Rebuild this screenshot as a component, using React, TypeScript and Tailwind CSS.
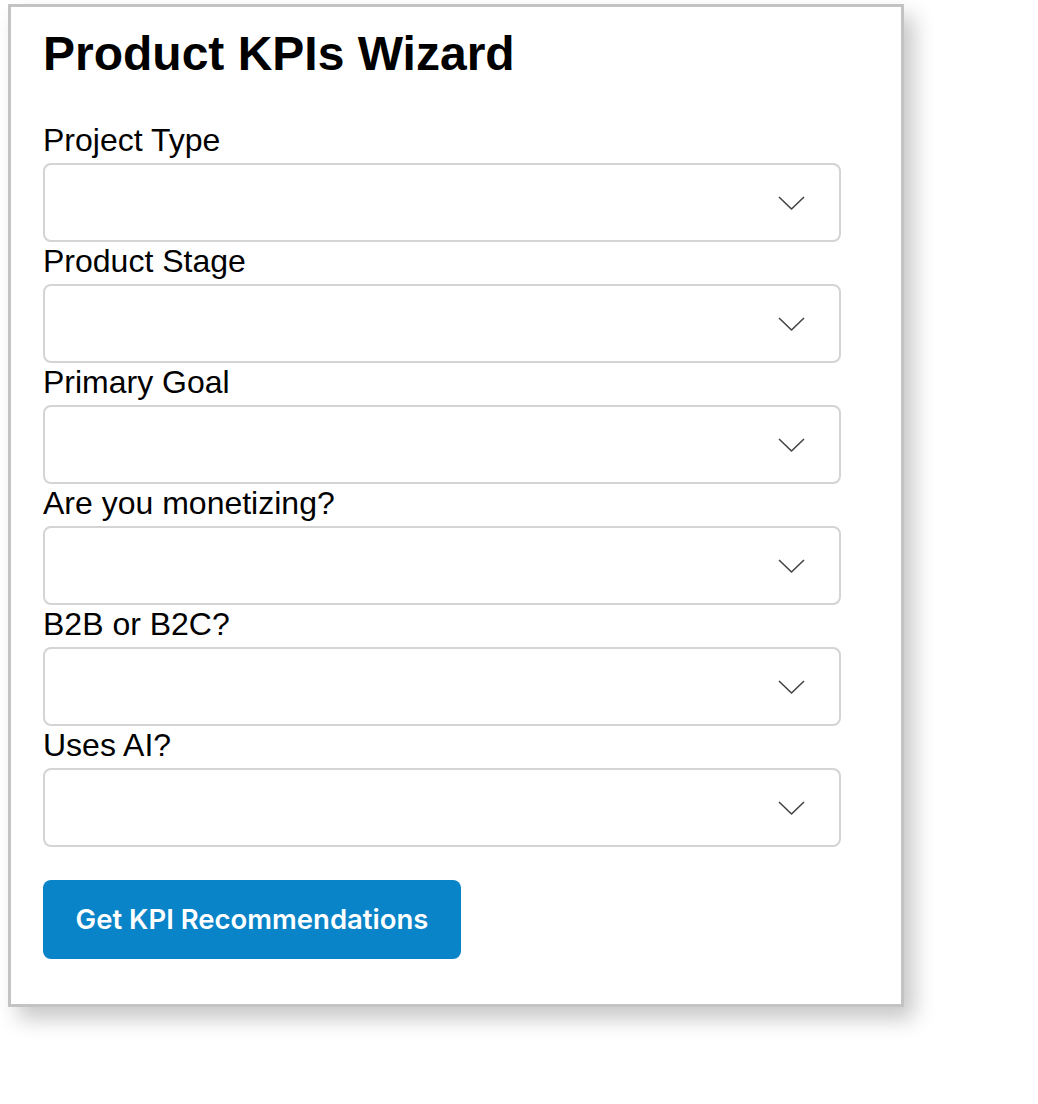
import { useState } from 'react';

const fields = [
  { id: 'projectType', label: 'Project Type' },
  { id: 'productStage', label: 'Product Stage' },
  { id: 'primaryGoal', label: 'Primary Goal' },
  { id: 'monetizing', label: 'Are you monetizing?' },
  { id: 'audience', label: 'B2B or B2C?' },
  { id: 'usesAi', label: 'Uses AI?' },
];

function Chevron() {
  return (
    <svg
      className="pointer-events-none absolute right-[36px] top-1/2 -translate-y-1/2"
      width="27"
      height="15"
      viewBox="0 0 27 15"
      fill="none"
    >
      <path d="M1 1.5 L13.5 13.5 L26 1.5" stroke="#444" strokeWidth="1.6" strokeLinejoin="round" />
    </svg>
  );
}

export default function App() {
  const [values, setValues] = useState<Record<string, string>>({});

  return (
    <div className="min-h-[1104px] bg-white pl-[8px] pt-[4px]" style={{ fontFamily: '"Liberation Sans", Arial, sans-serif' }}>
      <div className="w-[896px] border-[3px] border-[#c3c3c3] bg-white px-[32px] pt-[19px] pb-[45px] shadow-[10px_12px_20px_rgba(0,0,0,0.22)]">
        <h1 className="mb-[39px] text-[48px] font-bold leading-[56px] text-black">Product KPIs Wizard</h1>

        <form className="w-[798px]" onSubmit={(e) => e.preventDefault()}>
          {fields.map((field) => (
            <div key={field.id}>
              <label htmlFor={field.id} className="mb-[4px] block text-[32px] leading-[38px] text-black">
                {field.label}
              </label>
              <div className="relative">
                <select
                  id={field.id}
                  value={values[field.id] ?? ''}
                  onChange={(e) => setValues({ ...values, [field.id]: e.target.value })}
                  className="block h-[79px] w-full appearance-none rounded-[8px] border-2 border-[#d4d4d4] bg-white px-4 text-[28px] outline-none"
                >
                  <option value=""></option>
                </select>
                <Chevron />
              </div>
            </div>
          ))}

          {/* Submit */}
          <button
            type="submit"
            className="mt-[33px] h-[79px] w-[418px] rounded-[8px] bg-[#0984c8] text-[27.5px] font-semibold text-white"
            style={{ fontFamily: 'Inter, "Open Sans", sans-serif' }}
          >
            Get KPI Recommendations
          </button>
        </form>
      </div>
    </div>
  );
}
